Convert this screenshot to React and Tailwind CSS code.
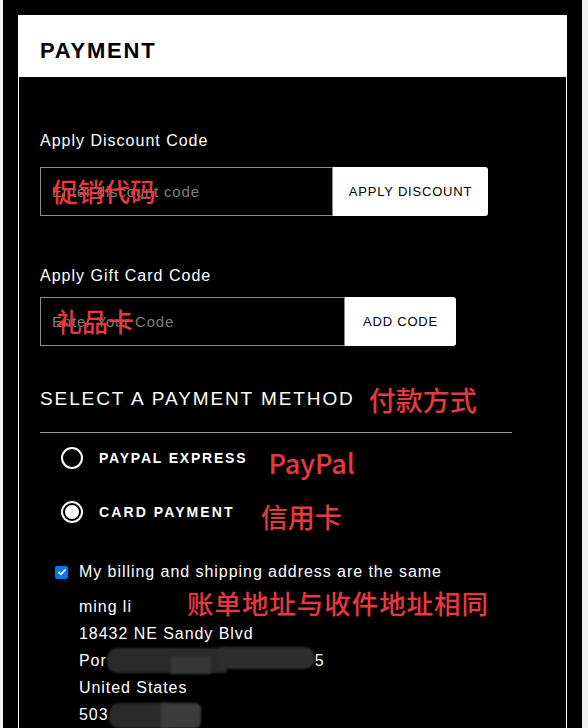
import React from "react";

const redNote = "font-['Noto_Sans_CJK_SC','Noto_Sans',sans-serif] font-medium text-[#e8383d] leading-none";

const Radio = ({ checked }) => (
  <span className="flex h-[22px] w-[22px] shrink-0 items-center justify-center rounded-full border-2 border-white">
    {checked && <span className="h-[14px] w-[14px] rounded-full bg-white" />}
  </span>
);

const CodeField = ({ label, placeholder, button, inputW, buttonW, note, noteLeft, labelGap }) => (
  <div>
    <div className="text-[16px] leading-[20px] tracking-[1px] text-white">{label}</div>
    <div className="relative flex h-[49px]" style={{ marginTop: labelGap }}>
      <input
        className="h-full border border-[#8c8c8c] bg-black px-[11px] text-[15px] tracking-[0.8px] text-white outline-none placeholder:text-[#7d7d7d]"
        style={{ width: inputW }}
        placeholder={placeholder}
      />
      <button
        className="h-full rounded-r-[3px] bg-white text-[13px] tracking-[0.8px] text-black"
        style={{ width: buttonW }}
      >
        {button}
      </button>
      <span className={`pointer-events-none absolute top-[11px] text-[26px] ${redNote}`} style={{ left: noteLeft }}>
        {note}
      </span>
    </div>
  </div>
);

const Blur = ({ className }) => <span className={`absolute blur-[1px] ${className}`} />;

export default function App() {
  return (
    <div className="h-[728px] overflow-hidden bg-[#f0f0f0] pl-[3px] pr-[6px] font-['Liberation_Sans',Arial,sans-serif]">
      <div className="h-full bg-black px-[15px] pt-[15px]">
        <div className="h-full bg-white px-px">
          <div className="h-[62px] pl-[21px] pt-[25px]">
            <h1 className="text-[22px] font-bold leading-[22px] tracking-[1.8px] text-black">PAYMENT</h1>
          </div>

          <div className="relative h-full bg-black pl-[21px] pt-[54px]">
            <CodeField
              label="Apply Discount Code"
              placeholder="Enter discount code"
              button="APPLY DISCOUNT"
              inputW={293}
              buttonW={155}
              note="促销代码"
              noteLeft={12}
              labelGap={16}
            />

            <div className="mt-[50px]">
              <CodeField
                label="Apply Gift Card Code"
                placeholder="Enter Your Code"
                button="ADD CODE"
                inputW={305}
                buttonW={111}
                note="礼品卡"
                noteLeft={16}
                labelGap={11}
              />
            </div>

            <div className="mt-[38px] flex w-[472px] items-center gap-[14px] border-b border-[#9a9a9a] pb-[19px]">
              <h2 className="text-[19px] leading-[24px] tracking-[1.9px] text-white">SELECT A PAYMENT METHOD</h2>
              <span className={`mt-[2px] text-[27px] ${redNote}`}>付款方式</span>
            </div>

            <div className="mt-[14px] flex h-[22px] items-center pl-[21px]">
              <Radio />
              <span className="ml-[16px] text-[14px] font-bold tracking-[1.8px] text-white">PAYPAL EXPRESS</span>
              <span className={`ml-[21px] mt-[8px] text-[27px] ${redNote}`}>PayPal</span>
            </div>

            <div className="mt-[32px] flex h-[22px] items-center pl-[21px]">
              <Radio checked />
              <span className="ml-[16px] text-[14px] font-bold tracking-[2.1px] text-white">CARD PAYMENT</span>
              <span className={`ml-[26px] mt-[8px] text-[27px] ${redNote}`}>信用卡</span>
            </div>

            <div className="mt-[38px] pl-[15px] text-[16px] tracking-[0.95px] text-white">
              <label className="flex h-[22px] items-center gap-[11px]">
                <span className="flex h-[13px] w-[13px] items-center justify-center rounded-[2px] bg-[#0075ff]">
                  <svg viewBox="0 0 12 12" className="h-[10px] w-[10px]">
                    <path d="M2.2 6.3 4.7 8.8 9.8 3.4" fill="none" stroke="white" strokeWidth="1.9" strokeLinecap="round" strokeLinejoin="round" />
                  </svg>
                </span>
                My billing and shipping address are the same
              </label>

              <div className="mt-[10px] pl-[24px]">
                <div className="flex h-[27px] items-center">ming li</div>
                <div className="flex h-[27px] items-center">18432 NE Sandy Blvd</div>
                <div className="flex h-[27px] items-center">
                  Por
                  <span className="relative inline-block h-[27px] w-[208px]">
                    <Blur className="left-0 top-[1px] h-[25px] w-[120px] rounded-l-[10px] bg-[#2a2a2a]" />
                    <Blur className="left-[64px] top-[9px] h-[18px] w-[40px] bg-[#363636]" />
                    <Blur className="left-[112px] top-0 h-[22px] w-[96px] rounded-r-full bg-[#2e2e2e]" />
                  </span>
                  5
                </div>
                <div className="flex h-[27px] items-center">United States</div>
                <div className="flex h-[27px] items-center">
                  503
                  <span className="relative inline-block h-[27px] w-[92px]">
                    <Blur className="left-0 top-[2px] h-[25px] w-[60px] rounded-l-[10px] bg-[#2a2a2a]" />
                    <Blur className="left-[52px] top-[2px] h-[25px] w-[40px] rounded-r-[6px] bg-[#3c3c3c]" />
                  </span>
                </div>
              </div>

              <span className={`pointer-events-none absolute left-[168px] top-[513px] text-[26.5px] ${redNote}`}>
                账单地址与收件地址相同
              </span>
            </div>
          </div>
        </div>
      </div>
    </div>
  );
}
